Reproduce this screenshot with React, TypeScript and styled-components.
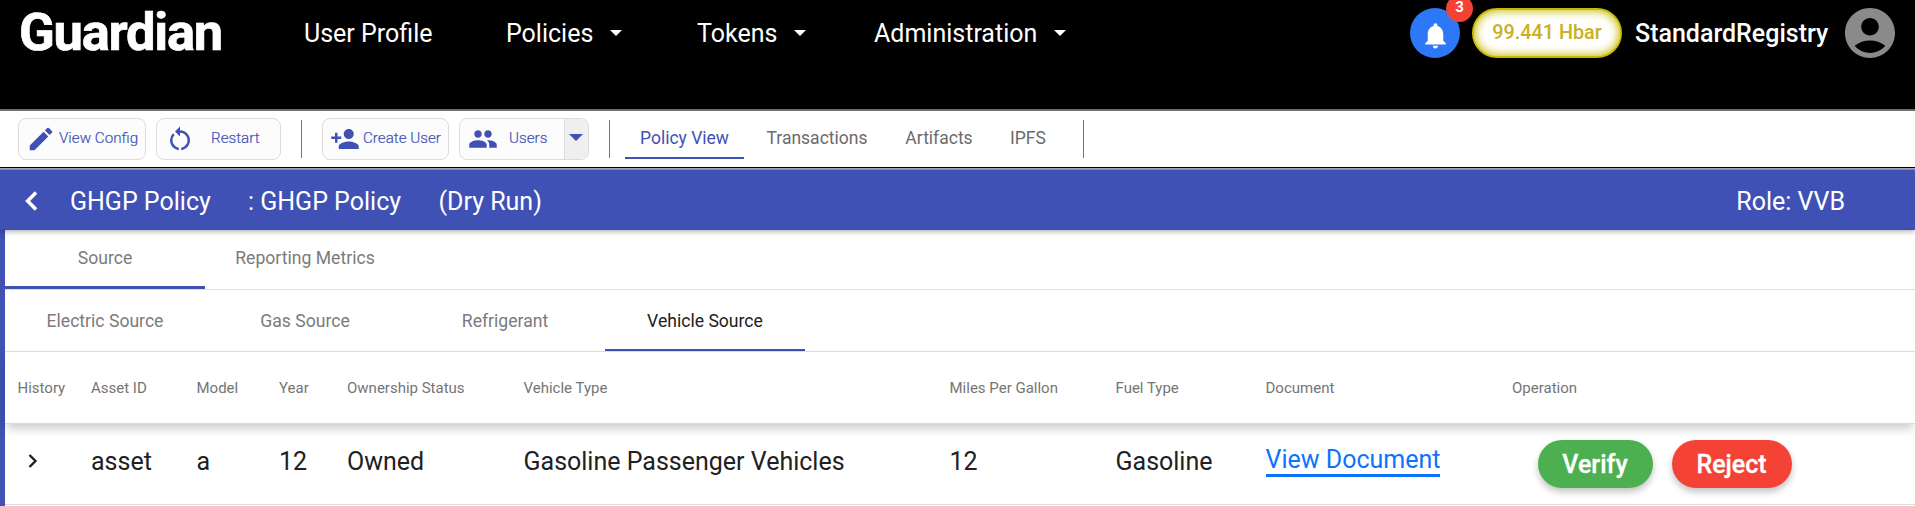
import React from "react";
import styled, { createGlobalStyle } from "styled-components";
import {
  MdAccountCircle,
  MdEdit,
  MdGroup,
  MdNotifications,
  MdPersonAdd,
  MdRestartAlt,
} from "react-icons/md";

const GlobalStyle = createGlobalStyle`
  *, *::before, *::after { box-sizing: border-box; }
  body {
    margin: 0;
    background: #fff;
    font-family: Roboto, "Liberation Sans", sans-serif;
    overflow: hidden;
  }
  button { font: inherit; margin: 0; padding: 0; }
`;

const Page = styled.div`
  width: 1915px;
  height: 506px;
  overflow: hidden;
  display: flex;
  flex-direction: column;
`;

/* ---------- top bar ---------- */

const Header = styled.header`
  height: 111px;
  flex: none;
  background: #000;
  border-bottom: 2px solid #6d6d6d;
  display: flex;
  align-items: flex-start;
  color: #fff;
  padding-right: 15px;
`;

const Logo = styled.div`
  width: 304px;
  padding-left: 19px;
  height: 65px;
  line-height: 65px;
  font-size: 52.5px;
  font-weight: 700;
  letter-spacing: -1.25px;
  -webkit-text-stroke: 0.7px #fff;
`;

const Nav = styled.nav`
  display: flex;
  flex: 1;
`;

const NavItem = styled.a<{ $width: number }>`
  width: ${(p) => p.$width}px;
  height: 66px;
  display: flex;
  align-items: center;
  gap: 17px;
  font-size: 25px;
  white-space: nowrap;
`;

const Caret = styled.span<{ $size: number }>`
  width: 0;
  height: 0;
  border: ${(p) => p.$size}px solid transparent;
  border-top-color: currentColor;
  border-bottom: 0;
`;

const HeaderRight = styled.div`
  display: flex;
  align-items: center;
  height: 66px;
`;

const Bell = styled.div`
  position: relative;
  width: 50px;
  height: 50px;
  border-radius: 50%;
  background: #2c78f6;
  display: flex;
  align-items: center;
  justify-content: center;
  padding-top: 4px;
  margin-right: 12px;
`;

const Badge = styled.span`
  position: absolute;
  right: -13px;
  top: -13px;
  width: 27px;
  height: 27px;
  padding-top: 5px;
  border-radius: 50%;
  background: #f44336;
  font-size: 15px;
  font-weight: 700;
  line-height: 15px;
  text-align: center;
`;

const Balance = styled.div`
  width: 150px;
  height: 50px;
  border-radius: 25px;
  border: 2px solid #c8b900;
  background: #fff;
  box-shadow: inset 0 0 10px 1px #c8b900;
  color: #c9b11f;
  font-size: 19.8px;
  font-weight: 500;
  line-height: 45px;
  text-align: center;
  white-space: nowrap;
  margin-right: 13px;
`;

const UserName = styled.div`
  width: 205px;
  font-size: 25px;
  font-weight: 500;
`;

const Avatar = styled.div`
  width: 60px;
  height: 60px;
  color: #8a8a8a;
`;

/* ---------- toolbar ---------- */

const Toolbar = styled.div`
  height: 59px;
  flex: none;
  display: flex;
  align-items: flex-start;
  padding: 7px 0 0 18px;
  border-bottom: 1px solid #8d90a8;
  box-shadow: inset 0 -1px 0 #a7a8b0, inset 0 -2px 0 #000;
`;

const ToolButton = styled.button<{ $width: number; $gap: number; $pad: number }>`
  width: ${(p) => p.$width}px;
  height: 42px;
  margin-right: 10px;
  padding: 0 0 0 ${(p) => p.$pad}px;
  display: flex;
  align-items: center;
  border: 1px solid #dcdcdc;
  border-radius: 8px;
  background: #fcfcfc;
  color: #3f51b5;
  font-size: 15.2px;
  font-weight: 300;
  white-space: nowrap;
  overflow: hidden;

  svg {
    flex: none;
    margin-right: ${(p) => p.$gap}px;
  }
`;

const ToolLabel = styled.span`
  padding-bottom: 2px;
  -webkit-text-stroke: 0.2px #3f51b5;
`;

const SplitArrow = styled.span`
  margin-left: auto;
  width: 24px;
  height: 100%;
  padding: 0 2px 3px 0;
  background: #efefef;
  border-left: 1px solid #dcdcdc;
  display: flex;
  align-items: center;
  justify-content: center;
`;

const Divider = styled.span<{ $left: number; $right: number }>`
  width: 1px;
  height: 38px;
  background: #757575;
  margin: 2px ${(p) => p.$right}px 0 ${(p) => p.$left}px;
`;

const ViewTab = styled.a<{ $width: number; $active?: boolean }>`
  width: ${(p) => p.$width}px;
  height: 41px;
  line-height: 41px;
  font-size: 17.5px;
  text-align: center;
  white-space: nowrap;
  color: ${(p) => (p.$active ? "#3f51b5" : "#6b6b6b")};
  border-bottom: 2px solid ${(p) => (p.$active ? "#3f51b5" : "transparent")};
`;

/* ---------- policy bar ---------- */

const PolicyBar = styled.div`
  position: relative;
  z-index: 1;
  height: 60px;
  flex: none;
  background: #3f51b5;
  border-bottom: 1px solid #2a56a0;
  box-shadow: 0 2px 5px rgba(0, 0, 0, 0.28);
  color: #fff;
  display: flex;
  align-items: center;
  padding: 3px 70px 0 25px;
  font-size: 25px;
  white-space: nowrap;

  svg { margin-right: 32px; }
`;

const PolicyText = styled.span<{ $width: number }>`
  width: ${(p) => p.$width}px;
`;

const Role = styled.span`
  margin-left: auto;
`;

/* ---------- content ---------- */

const Content = styled.main`
  flex: 1;
  border-left: 5px solid #3f51b5;
`;

const TabRow = styled.div<{ $height: number }>`
  height: ${(p) => p.$height}px;
  display: flex;
  border-bottom: 1px solid #dedede;
`;

const Tab = styled.div<{ $line?: number; $dark?: boolean; $lead: number }>`
  width: 200px;
  font-size: 17.6px;
  line-height: ${(p) => p.$lead}px;
  text-align: center;
  color: ${(p) => (p.$dark ? "#212121" : "#7b7b7b")};
  box-shadow: inset 0 -${(p) => p.$line ?? 0}px 0 #3f51b5;
`;

const columns = "73.5px 105.5px 82.5px 68px 176.5px 426px 166px 150px 246.5px 1fr";

const TableHead = styled.div`
  position: relative;
  height: 72px;
  display: grid;
  grid-template-columns: ${columns};
  align-items: center;
  padding-left: 12.5px;
  border-bottom: 1px solid #dadcdb;
  background: #fff;
  box-shadow: 0 6px 10px -2px rgba(0, 0, 0, 0.22);
  color: #757575;
  font-size: 15px;
  white-space: nowrap;
`;

const TableRow = styled.div`
  height: 81px;
  display: grid;
  grid-template-columns: ${columns};
  align-items: center;
  padding-left: 12.5px;
  border-bottom: 1px solid #dedede;
  color: #212121;
  font-size: 25px;
  white-space: nowrap;
`;

const Cell = styled.span`
  padding-bottom: 6px;
`;

const Expand = styled(Cell)`
  display: flex;
  padding-left: 10.5px;
`;

const DocLink = styled.a`
  justify-self: start;
  margin-bottom: 6px;
  color: #0b73ff;
  line-height: 29px;
  border-bottom: 3px solid #0b73ff;
`;

const Actions = styled.div`
  display: flex;
  gap: 19px;
  padding-left: 25.5px;
`;

const ActionButton = styled.button<{ $width: number; $color: string }>`
  width: ${(p) => p.$width}px;
  height: 48px;
  border: 0;
  border-radius: 24px;
  background: ${(p) => p.$color};
  color: #fff;
  font-size: 25px;
  font-weight: 500;
  -webkit-text-stroke: 0.3px #fff;
  box-shadow: 0 4px 7px rgba(0, 0, 0, 0.24);
`;

const headings = [
  "History", "Asset ID", "Model", "Year", "Ownership Status", "Vehicle Type",
  "Miles Per Gallon", "Fuel Type", "Document", "Operation",
];

const values = ["asset", "a", "12", "Owned", "Gasoline Passenger Vehicles", "12", "Gasoline"];

export default function App() {
  return (
    <Page>
      <GlobalStyle />
      <Header>
        <Logo>Guardian</Logo>
        <Nav>
          <NavItem $width={202}>User Profile</NavItem>
          <NavItem $width={191}>Policies<Caret $size={6.5} /></NavItem>
          <NavItem $width={177}>Tokens<Caret $size={6.5} /></NavItem>
          <NavItem $width={230}>Administration<Caret $size={6.5} /></NavItem>
        </Nav>
        <HeaderRight>
          <Bell>
            <MdNotifications size={31} />
            <Badge>3</Badge>
          </Bell>
          <Balance>99.441 Hbar</Balance>
          <UserName>StandardRegistry</UserName>
          <Avatar><MdAccountCircle size={60} /></Avatar>
        </HeaderRight>
      </Header>

      <Toolbar>
        <ToolButton $width={128} $pad={7} $gap={3}>
          <MdEdit size={30} /><ToolLabel>View Config</ToolLabel>
        </ToolButton>
        <ToolButton $width={125} $pad={8} $gap={16}>
          <MdRestartAlt size={30} /><ToolLabel>Restart</ToolLabel>
        </ToolButton>
        <Divider $left={10} $right={20} />
        <ToolButton $width={127} $pad={7} $gap={3}>
          <MdPersonAdd size={30} /><ToolLabel>Create User</ToolLabel>
        </ToolButton>
        <ToolButton $width={130} $pad={8} $gap={11}>
          <MdGroup size={30} /><ToolLabel>Users</ToolLabel>
          <SplitArrow><Caret $size={7} /></SplitArrow>
        </ToolButton>
        <Divider $left={10} $right={15} />
        <ViewTab $width={119} $active>Policy View</ViewTab>
        <ViewTab $width={146}>Transactions</ViewTab>
        <ViewTab $width={98}>Artifacts</ViewTab>
        <ViewTab $width={80}>IPFS</ViewTab>
        <Divider $left={15} $right={0} />
      </Toolbar>

      <PolicyBar>
        <svg width="13" height="20" viewBox="0 0 13 20" fill="none" stroke="#fff" strokeWidth="3.5">
          <path d="M11 1.5 2.6 10 11 18.5" />
        </svg>
        <PolicyText $width={178}>GHGP Policy</PolicyText>
        <PolicyText $width={190.5}>: GHGP Policy</PolicyText>
        <PolicyText $width={110}>(Dry Run)</PolicyText>
        <Role>Role: VVB</Role>
      </PolicyBar>

      <Content>
        <TabRow $height={60}>
          <Tab $lead={57} $line={3}>Source</Tab>
          <Tab $lead={57}>Reporting Metrics</Tab>
        </TabRow>
        <TabRow $height={62}>
          <Tab $lead={63}>Electric Source</Tab>
          <Tab $lead={63}>Gas Source</Tab>
          <Tab $lead={63}>Refrigerant</Tab>
          <Tab $lead={63} $line={2} $dark>Vehicle Source</Tab>
        </TabRow>
        <TableHead>
          {headings.map((h) => <span key={h}>{h}</span>)}
        </TableHead>
        <TableRow>
          <Expand>
            <svg width="10" height="14" viewBox="0 0 10 14" fill="none" stroke="#212121" strokeWidth="2.4">
              <path d="M1.5 1 7.5 7l-6 6" />
            </svg>
          </Expand>
          {values.map((v, i) => <Cell key={i}>{v}</Cell>)}
          <DocLink>View Document</DocLink>
          <Actions>
            <ActionButton $width={115} $color="#4caf50">Verify</ActionButton>
            <ActionButton $width={120} $color="#f44336">Reject</ActionButton>
          </Actions>
        </TableRow>
      </Content>
    </Page>
  );
}
